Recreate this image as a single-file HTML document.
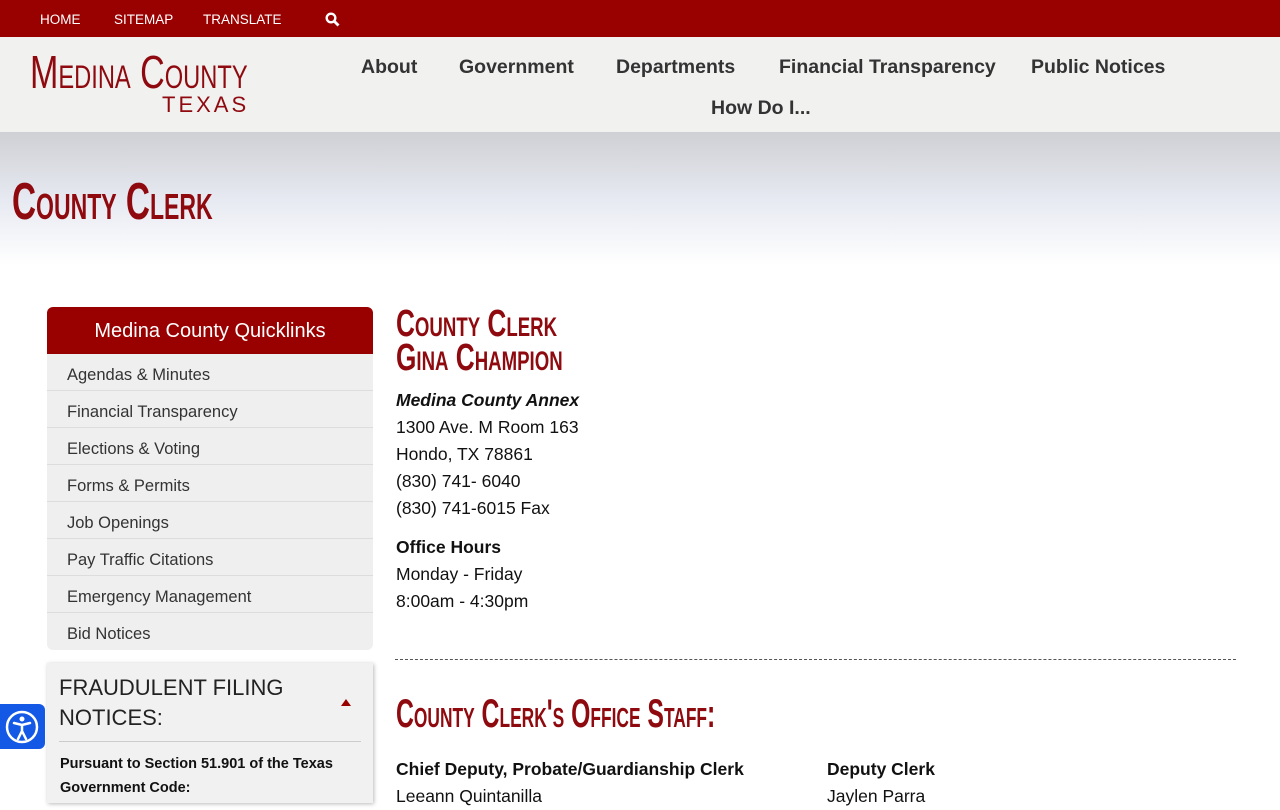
<!DOCTYPE html>
<html><head><meta charset="utf-8"><style>
*{margin:0;padding:0;box-sizing:border-box}
body{width:1280px;height:800px;overflow:hidden;font-family:"Liberation Sans",sans-serif;background:#fff;position:relative;color:#111}
.top{height:37px;background:#990000;color:#fff;font-size:13.5px;position:relative}
.top span{position:absolute;top:12px}
.hdr{height:95px;background:#f1f1f0;position:relative}
.cond{font-family:"Liberation Sans Narrow","Liberation Sans",sans-serif;font-variant:small-caps;display:inline-block;transform-origin:0 0;color:#8f0a0f}
.nav a{position:absolute;font-weight:bold;font-size:19.5px;color:#333;text-decoration:none}
.banner{height:133px;background:linear-gradient(#cfd0d4 0,#e6e9f1 50%,#fff 100%)}
.side{position:absolute;left:47px;top:307px;width:326px}
.qh{background:#990000;color:#fff;height:47px;border-radius:6px 6px 0 0;text-align:center;font-size:20px;line-height:49px}
.ql div{height:37px;border-bottom:1px solid #ddd;background:#efefef;padding-left:20px;line-height:42px;font-size:16.5px;color:#333}
.fr{position:absolute;left:47px;top:663px;width:326px;height:140px;background:#f1f1f1;box-shadow:1px 1px 4px #bbb;padding:10px 12px}
.main{position:absolute;left:396px;font-size:17.5px;line-height:27px}
</style></head><body>
<div class="top"><span style="left:40px">HOME</span><span style="left:114px">SITEMAP</span><span style="left:203px">TRANSLATE</span>
<svg style="position:absolute;left:325px;top:12px" width="15" height="15" viewBox="0 0 15 15"><circle cx="6" cy="6" r="4.3" fill="none" stroke="#fff" stroke-width="2.4"/><path d="M9 9l4.5 4.5" stroke="#fff" stroke-width="2.8"/></svg></div>
<div class="hdr">
<div class="cond" style="position:absolute;left:30px;top:8px;font-size:46px;transform:scaleX(.74);white-space:nowrap">Medina County</div>
<div style="position:absolute;left:162px;top:55px;font-size:22px;letter-spacing:3px;color:#8f0a0f">TEXAS</div>
<div class="nav"><a style="left:361px;top:19px">About</a><a style="left:459px;top:19px">Government</a><a style="left:616px;top:19px">Departments</a><a style="left:779px;top:19px">Financial Transparency</a><a style="left:1031px;top:19px">Public Notices</a><a style="left:711px;top:60px">How Do I...</a></div>
</div>
<div class="banner"><div class="cond" style="margin:40px 0 0 12px;font-size:52px;transform:scaleX(.64);white-space:nowrap;font-weight:bold">County Clerk</div></div>
<div class="side"><div class="qh">Medina County Quicklinks</div>
<div class="ql"><div>Agendas &amp; Minutes</div><div>Financial Transparency</div><div>Elections &amp; Voting</div><div>Forms &amp; Permits</div><div>Job Openings</div><div>Pay Traffic Citations</div><div>Emergency Management</div><div style="border:0;border-radius:0 0 6px 6px">Bid Notices</div></div></div>
<div class="fr"><div style="font-size:22px;line-height:30px;color:#222;border-bottom:1px solid #ccc;padding-bottom:8px">FRAUDULENT FILING<br>NOTICES:</div>
<div style="position:absolute;left:294px;top:36px;width:0;height:0;border:5px solid transparent;border-bottom:7px solid #990000;border-top:0"></div>
<div style="font-weight:bold;font-size:14.5px;line-height:24px;margin-top:10px;margin-left:1px">Pursuant to Section 51.901 of the Texas Government Code:</div></div>
<div style="position:absolute;left:0;top:704px;width:45px;height:45px;background:#1459e6;border-radius:0 6px 6px 0"><svg width="45" height="45" viewBox="0 0 45 45"><circle cx="22" cy="23" r="15" fill="none" stroke="#fff" stroke-width="2.5"/><circle cx="22" cy="15" r="2.5" fill="#fff"/><path d="M14 19l8 2 8-2M22 21v6l-4 8M22 27l4 8" stroke="#fff" stroke-width="2.5" fill="none" stroke-linecap="round"/></svg></div>
<div class="cond" style="position:absolute;left:396px;top:307px;font-size:38px;line-height:34px;transform:scaleX(.69);white-space:nowrap;font-weight:bold">County Clerk<br>Gina Champion</div>
<div class="main" style="top:387px"><b><i>Medina County Annex</i></b><br>1300 Ave. M Room 163<br>Hondo, TX 78861<br>(830) 741- 6040<br>(830) 741-6015 Fax</div>
<div class="main" style="top:534px"><b>Office Hours</b><br>Monday - Friday<br>8:00am - 4:30pm</div>
<div style="position:absolute;left:395px;top:659px;width:841px;border-top:1px dashed #555"></div>
<div class="cond" style="position:absolute;left:396px;top:692px;font-size:40px;transform:scaleX(.62);white-space:nowrap;font-weight:bold">County Clerk's Office Staff:</div>
<div class="main" style="top:756px"><b>Chief Deputy, Probate/Guardianship Clerk</b><br>Leeann Quintanilla</div>
<div class="main" style="top:756px;left:827px"><b>Deputy Clerk</b><br>Jaylen Parra</div>
</body></html>
